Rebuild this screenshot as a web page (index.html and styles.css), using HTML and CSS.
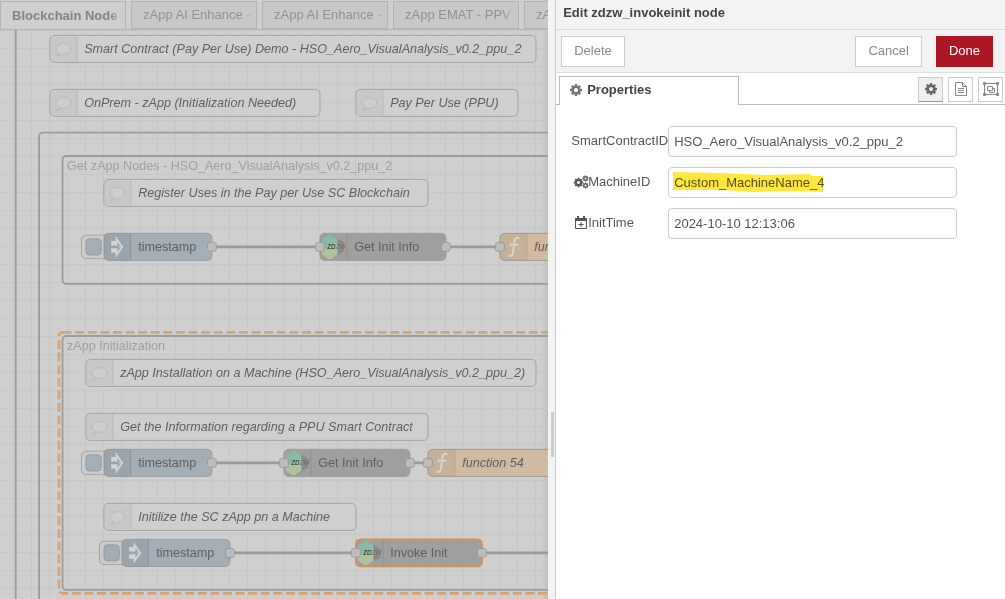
FILE: index.html
```html
<!DOCTYPE html>
<html lang="en">
<head>
<meta charset="utf-8">
<title>Edit zdzw_invokeinit node</title>
<link rel="stylesheet" href="styles.css">
</head>
<body>
<svg class="defs" aria-hidden="true">
  <symbol id="cog" viewBox="0 0 1792 1792"><path d="M1152 896q0-106-75-181t-181-75-181 75-75 181 75 181 181 75 181-75 75-181zm512-109v222q0 12-8 23t-20 13l-185 28q-19 54-39 91 35 50 107 138 10 12 10 25t-9 23q-27 37-99 108t-94 71q-12 0-26-9l-138-108q-44 23-91 38-16 136-29 186-7 28-36 28h-222q-14 0-24.5-8.5t-11.5-21.5l-28-184q-49-16-90-37l-141 107q-10 9-25 9-14 0-25-11-126-114-165-168-7-10-7-23 0-12 8-23 15-21 51-66.5t54-70.5q-27-50-41-99l-183-27q-13-2-21-12.5t-8-23.5v-222q0-12 8-23t19-13l186-28q14-46 39-92-40-57-107-138-10-12-10-24 0-10 9-23 26-36 98.500-107.500t94.500-71.500q13 0 26 10l138 107q44-23 91-38 16-136 29-186 7-28 36-28h222q14 0 24.500 8.500t11.500 21.500l28 184q49 16 90 37l142-107q9-9 24-9 13 0 25 10 129 119 165 170 7 8 7 22 0 12-8 23-15 21-51 66.500t-54 70.500q26 50 41 98l183 28q13 2 21 12.500t8 23.500z"/></symbol>
  <symbol id="bubble" viewBox="0 0 30 30"><path class="bubble" d="M10.500 19.700C8 18.700 6.800 17 6.800 15c0-3.400 3.700-6 8.200-6s8.200 2.600 8.200 6-3.700 6-8.200 6c-.8 0-1.600-.1-2.300-.2-1.500 1.400-3.300 2.200-5.300 2.300 1.400-1 2.600-2 3.100-3.400z"/></symbol>
  <symbol id="arrow" viewBox="0 0 30 30"><path class="glyph" fill-rule="evenodd" d="M13 3l8.500 12L13 27v-5.500H8v-5h8.500L17.800 15l-1.300-1.500H8v-5h5zM15 9.500v4h2.500L18.700 15l-1.200 1.500H15v4l4.200-5.500z"/></symbol>
  <symbol id="func" viewBox="0 0 30 30"><path class="func-glyph" d="M22 5.500c-3.500-1.800-5.400-.5-6 3.500l-1.500 12c-.5 4-2.500 5-5 3.500M10.500 12.500h10"/></symbol>
  <symbol id="zdzw" viewBox="0 0 30 30">
    <path fill="#8a8a8a" d="M19 5.500l8 4.500v10l-8 4.500z"/>
    <path fill="#87bba4" d="M11 1l8.500 5.500v9L11 15l-8.800 5V6.500z"/>
    <path fill="#adc49d" d="M2.200 19L11 14l8.500-1v10.500L11 29l-8.800-5.500z"/>
    <text class="zd" x="8" y="17">ZD<tspan class="zw">ZW</tspan></text>
  </symbol>
  <symbol id="port" viewBox="0 0 12 12"><rect class="port" x="1" y="1" width="10" height="10" rx="3"/></symbol>
  <symbol id="inject" viewBox="0 0 158 34">
    <rect class="button" x="2" y="4" width="40" height="26" rx="5"/>
    <rect class="button-face" x="7" y="8" width="17" height="18" rx="4"/>
    <rect class="inject" x="27" y="2" width="120" height="30" rx="5"/>
    <path class="shade" d="M57 2H32q-5 0-5 5v20q0 5 5 5h25z"/>
    <path class="divider" d="M56.500 2v30"/>
    <use href="#arrow" x="27" y="2" width="30" height="30"/>
    <use href="#port" x="141" y="11" width="12" height="12"/>
  </symbol>
  <symbol id="calendar" viewBox="0 0 14 14"><path fill="none" stroke="currentColor" d="M1.500 3.500h11v9h-11zM7 6v5M4.500 8.500h5"/><path fill="currentColor" d="M1 2h12v3H1zM3 0h2v3H3zM9 0h2v3H9z"/></symbol>
</svg>

<main class="workspace">
  <div class="tabs" role="tablist">
    <button class="tab active" role="tab" aria-selected="true"><span>Blockchain Node E</span></button>
    <button class="tab" role="tab"><span>zApp AI Enhance - P</span></button>
    <button class="tab" role="tab"><span>zApp AI Enhance - P</span></button>
    <button class="tab" role="tab"><span>zApp EMAT - PPV</span></button>
    <button class="tab" role="tab"><span>zApp</span></button>
  </div>
  <svg class="canvas" role="img" aria-label="Flow">
    <defs>
      <pattern id="grid" width="20" height="20" patternUnits="userSpaceOnUse"><path class="grid-line" d="M0 19.500h20M19.500 0v20"/></pattern>
    </defs>
    <g transform="scale(.9) translate(15.500 1)">
      <rect x="-20" y="-20" width="3000" height="2000" fill="url(#grid)"/>

      <path class="group" d="M2-20V2000"/>
      <rect class="group" x="28" y="113" width="3000" height="2000" rx="4"/>
      <rect class="group" x="54" y="139" width="3000" height="142" rx="4"/>
      <rect class="selection" x="50" y="335" width="3000" height="290" rx="4"/>
      <rect class="group" x="54" y="339" width="3000" height="282" rx="4"/>
      <text class="group-label" x="59" y="155">Get zApp Nodes - HSO_Aero_VisualAnalysis_v0.2_ppu_2</text>
      <text class="group-label" x="59" y="355">zApp Initialization</text>

      <path class="wire" d="M220 240H340M480 240H540M220 480H300M440 480H460M240 580H380M520 580H3000"/>

      <g transform="translate(40 5)"><rect class="comment" width="540" height="30" rx="5"/><path class="comment-shade" d="M30 1H5Q1 1 1 5v20q0 4 4 4h25z"/><path class="divider" d="M30 1v28"/><use href="#bubble" width="30" height="30"/><text class="note" x="38" y="20">Smart Contract (Pay Per Use) Demo - HSO_Aero_VisualAnalysis_v0.2_ppu_2</text></g>
      <g transform="translate(40 65)"><rect class="comment" width="300" height="30" rx="5"/><path class="comment-shade" d="M30 1H5Q1 1 1 5v20q0 4 4 4h25z"/><path class="divider" d="M30 1v28"/><use href="#bubble" width="30" height="30"/><text class="note" x="38" y="20">OnPrem - zApp (Initialization Needed)</text></g>
      <g transform="translate(380 65)"><rect class="comment" width="180" height="30" rx="5"/><path class="comment-shade" d="M30 1H5Q1 1 1 5v20q0 4 4 4h25z"/><path class="divider" d="M30 1v28"/><use href="#bubble" width="30" height="30"/><text class="note" x="38" y="20">Pay Per Use (PPU)</text></g>
      <g transform="translate(100 165)"><rect class="comment" width="360" height="30" rx="5"/><path class="comment-shade" d="M30 1H5Q1 1 1 5v20q0 4 4 4h25z"/><path class="divider" d="M30 1v28"/><use href="#bubble" width="30" height="30"/><text class="note" x="38" y="20">Register Uses in the Pay per Use SC Blockchain</text></g>
      <g transform="translate(80 365)"><rect class="comment" width="500" height="30" rx="5"/><path class="comment-shade" d="M30 1H5Q1 1 1 5v20q0 4 4 4h25z"/><path class="divider" d="M30 1v28"/><use href="#bubble" width="30" height="30"/><text class="note" x="38" y="20">zApp Installation on a Machine (HSO_Aero_VisualAnalysis_v0.2_ppu_2)</text></g>
      <g transform="translate(80 425)"><rect class="comment" width="380" height="30" rx="5"/><path class="comment-shade" d="M30 1H5Q1 1 1 5v20q0 4 4 4h25z"/><path class="divider" d="M30 1v28"/><use href="#bubble" width="30" height="30"/><text class="note" x="38" y="20">Get the Information regarding a PPU Smart Contract</text></g>
      <g transform="translate(100 525)"><rect class="comment" width="280" height="30" rx="5"/><path class="comment-shade" d="M30 1H5Q1 1 1 5v20q0 4 4 4h25z"/><path class="divider" d="M30 1v28"/><use href="#bubble" width="30" height="30"/><text class="note" x="38" y="20">Initilize the SC zApp pn a Machine</text></g>

      <use href="#inject" x="73" y="223" width="158" height="34"/><text class="name" x="138" y="245">timestamp</text>
      <use href="#inject" x="73" y="463" width="158" height="34"/><text class="name" x="138" y="485">timestamp</text>
      <use href="#inject" x="93" y="563" width="158" height="34"/><text class="name" x="158" y="585">timestamp</text>

      <g transform="translate(340 225)"><rect class="zdzw" width="140" height="30" rx="5"/><path class="divider" d="M30 1v28"/><use href="#zdzw" width="30" height="30"/><text class="name" x="38" y="20">Get Init Info</text><use href="#port" x="-6" y="9" width="12" height="12"/><use href="#port" x="134" y="9" width="12" height="12"/></g>
      <g transform="translate(300 465)"><rect class="zdzw" width="140" height="30" rx="5"/><path class="divider" d="M30 1v28"/><use href="#zdzw" width="30" height="30"/><text class="name" x="38" y="20">Get Init Info</text><use href="#port" x="-6" y="9" width="12" height="12"/><use href="#port" x="134" y="9" width="12" height="12"/></g>
      <g transform="translate(380 565)"><rect class="zdzw selected" width="140" height="30" rx="5"/><path class="divider" d="M30 1v28"/><use href="#zdzw" width="30" height="30"/><text class="name" x="38" y="20">Invoke Init</text><use href="#port" x="-6" y="9" width="12" height="12"/><use href="#port" x="134" y="9" width="12" height="12"/></g>

      <g transform="translate(540 225)"><rect class="function" width="160" height="30" rx="5"/><path class="shade" d="M30 0H5Q0 0 0 5v20q0 5 5 5h25z"/><path class="divider" d="M30 1v28"/><use href="#func" width="30" height="30"/><text class="note" x="38" y="20">fun</text><use href="#port" x="-6" y="9" width="12" height="12"/></g>
      <g transform="translate(460 465)"><rect class="function" width="160" height="30" rx="5"/><path class="shade" d="M30 0H5Q0 0 0 5v20q0 5 5 5h25z"/><path class="divider" d="M30 1v28"/><use href="#func" width="30" height="30"/><text class="note" x="38" y="20">function 54</text><use href="#port" x="-6" y="9" width="12" height="12"/></g>
    </g>
  </svg>
</main>

<aside class="tray">
  <div class="resizer"><span class="grip"></span></div>
  <div class="editor">
    <h1 class="title">Edit zdzw_invokeinit node</h1>
    <div class="toolbar">
      <button class="btn">Delete</button>
      <span class="spacer"></span>
      <button class="btn">Cancel</button>
      <button class="btn primary">Done</button>
    </div>
    <div class="sections">
      <button class="section"><svg class="icon" viewBox="0 0 14 14"><use href="#cog" width="14" height="14"/></svg>Properties</button>
      <div class="views">
        <button class="view on" aria-label="Properties"><svg class="icon" viewBox="0 0 14 14"><use href="#cog" width="14" height="14"/></svg></button>
        <button class="view" aria-label="Description"><svg class="icon" viewBox="0 0 14 14" fill="none" stroke="currentColor"><path d="M1.500.5h7l4 4v9h-11zM8.500.5v4h4M4 6.500h6M4 8.500h6M4 10.500h6"/></svg></button>
        <button class="view" aria-label="Appearance"><svg class="icon wide" viewBox="0 0 16 14" fill="none" stroke="currentColor"><path d="M2 1.500h12M2 12.500h12M1.500 2v10M14.500 2v10M4.500 4.500h5v4h-5zM9.500 6.500h2v4h-5v-2"/><path fill="currentColor" d="M.5.5h2v2h-2zM13.500.5h2v2h-2zM.5 11.500h2v2h-2zM13.500 11.500h2v2h-2z"/></svg></button>
      </div>
    </div>
    <form class="form">
      <div class="row"><label for="contract">SmartContractID</label><div class="field"><input id="contract" type="text" value="HSO_Aero_VisualAnalysis_v0.2_ppu_2"></div></div>
      <div class="row"><label for="machine"><svg class="icon" viewBox="0 0 14 14"><use href="#cog" x="-1" y="2" width="11" height="11"/><use href="#cog" x="8" y="0" width="7" height="7"/><use href="#cog" x="8" y="7" width="7" height="7"/></svg>MachineID</label><div class="field"><input id="machine" type="text" value="Custom_MachineName_4"><svg class="marker" viewBox="0 0 150 20" preserveAspectRatio="none" aria-hidden="true"><path d="M0 0l50 1 40 2 46-1 3 2h11v16l-24-1-46 1-30-2H0z"/></svg></div></div>
      <div class="row"><label for="time"><svg class="icon" viewBox="0 0 14 14"><use href="#calendar" width="14" height="14"/></svg>InitTime</label><div class="field"><input id="time" type="text" value="2024-10-10 12:13:06"></div></div>
    </form>
  </div>
</aside>
</body>
</html>
```

FILE: styles.css
```css
* { box-sizing: border-box; }

body {
  margin: 0;
  height: 100vh;
  display: grid;
  grid-template-columns: minmax(0, 6fr) minmax(0, 5fr);
  overflow: hidden;
  font: 13px/20px "Liberation Sans", Arial, sans-serif;
  color: #555;
  background: #fff;
}

button, input { font: inherit; color: inherit; margin: 0; }
.defs { position: absolute; width: 0; height: 0; }

/* Workspace, dimmed behind the tray */
.workspace {
  display: flex;
  flex-direction: column;
  min-height: 0;
  overflow: hidden;
  background: linear-gradient(to left, #bdbdbd, #cfcfcf 6px);
}
.tabs {
  display: flex;
  gap: 5px;
  height: 30px;
  padding-top: 1px;
  border-bottom: 1px solid #b4b4b4;
}
.tab {
  flex: 0 0 126px;
  min-width: 0;
  height: 28px;
  padding: 0 1px 0 11px;
  border: 1px solid #b4b4b4;
  background: #c8c8c8;
  color: #929292;
  text-align: left;
}
.tab span {
  display: block;
  overflow: hidden;
  white-space: nowrap;
  -webkit-mask-image: linear-gradient(to left, transparent, #000 14px);
  mask-image: linear-gradient(to left, transparent, #000 14px);
}
.tab.active { background: #cfcfcf; border-bottom: 0; color: #838383; font-weight: bold; }

.canvas { display: block; flex: 1; width: 100%; min-height: 0; font-size: 14px; }
.grid-line { stroke: #c6c6c6; fill: none; }
.group { fill: none; stroke: #9c9c9c; stroke-width: 2; }
.group-label { fill: #a0a0a0; }
.selection { fill: none; stroke: #d8a373; stroke-width: 3; stroke-dasharray: 10 4; }
.wire { fill: none; stroke: #9a9a9a; stroke-width: 3; }
.comment { fill: #cfcfcf; stroke: #9e9e9e; }
.comment-shade { fill: #c8c8c8; }
.bubble { fill: #cecece; stroke: #b6b6b6; }
.divider { fill: none; stroke: #000; stroke-opacity: .1; }
.shade { fill: #000; fill-opacity: .05; }
.name, .note { fill: #606060; }
.note { font-style: italic; }
.inject { fill: #a3aeb7; stroke: #999; }
.button { fill: #cbcbcb; stroke: #a0a0a0; }
.button-face { fill: #a3aeb7; stroke: #999; }
.zdzw { fill: #a09f9d; stroke: #999; }
.zdzw.selected { stroke: #d68f50; stroke-width: 2; }
.function { fill: #d1baa0; stroke: #999; }
.glyph { fill: #d4d4d4; }
.func-glyph { fill: none; stroke: #d6d6d6; stroke-width: 2; }
.port { fill: #bcbcbc; stroke: #989898; }
.zd { font-size: 7px; font-weight: bold; font-style: italic; fill: #414b46; }
.zw { fill: #6a6a6a; font-weight: normal; }

/* Tray */
.tray { display: flex; min-width: 0; background: #fff; }
.resizer {
  display: flex;
  align-items: center;
  justify-content: flex-end;
  flex: 0 0 8px;
  padding: 270px 1px 0 0;
  background: #f3f3f3;
  border-right: 1px solid #ccc;
}
.grip { width: 3px; height: 45px; background: #ccc; }
.editor { flex: 1; min-width: 0; }
.title {
  margin: 0;
  padding: 3px 7px 6px;
  border-bottom: 1px solid #ddd;
  background: #f3f3f3;
  color: #444;
  font-size: 13px;
  line-height: 20px;
}
.toolbar {
  display: flex;
  gap: 14px;
  padding: 6px 12px 5px 5px;
  background: #f3f3f3;
  border-bottom: 1px solid #ddd;
}
.spacer { flex: 1; }
.btn {
  height: 31px;
  padding: 0 12px 2px;
  border: 1px solid #ccc;
  background: #fff;
  color: #888;
}
.btn.primary { border-color: #ad1625; background: #ad1625; color: #fff; }

.sections {
  display: flex;
  justify-content: space-between;
  height: 32px;
  padding: 3px 2px 0 3px;
  box-shadow: inset 0 -1px #bbb;
}
.section {
  display: flex;
  align-items: center;
  gap: 4px;
  width: 180px;
  padding: 0 9px 2px;
  border: 1px solid #bbb;
  border-bottom: 0;
  background: #fff;
  color: #444;
  font-weight: bold;
}
.section .icon { color: #777; }
.views { display: flex; gap: 5px; padding-top: 1px; }
.view {
  display: grid;
  place-items: center;
  width: 25px;
  height: 25px;
  padding: 0 0 2px;
  border: 1px solid #ccc;
  background: #fff;
  color: #888;
}
.view.on { background: #efefef; border-bottom-color: #999; color: #666; }
.icon { width: 14px; height: 14px; flex: none; fill: currentColor; overflow: visible; }
.icon[fill="none"] { fill: none; }
.icon.wide { width: 16px; }

.form { display: grid; gap: 10px; padding: 21px 18px; }
.row { display: flex; align-items: center; }
.row label { display: flex; align-items: center; flex: 0 0 94px; min-width: 0; padding-bottom: 2px; }
.row:first-child label { justify-content: flex-end; }
.field { position: relative; width: 70%; }
.field input {
  display: block;
  width: 100%;
  height: 31px;
  padding: 0 5px 1px;
  border: 1px solid #ccc;
  border-radius: 4px;
  background: #fff;
}
.marker {
  position: absolute;
  left: 5px;
  top: 5px;
  width: 150px;
  height: 20px;
  fill: #ffe83b;
  mix-blend-mode: multiply;
  pointer-events: none;
}
```
